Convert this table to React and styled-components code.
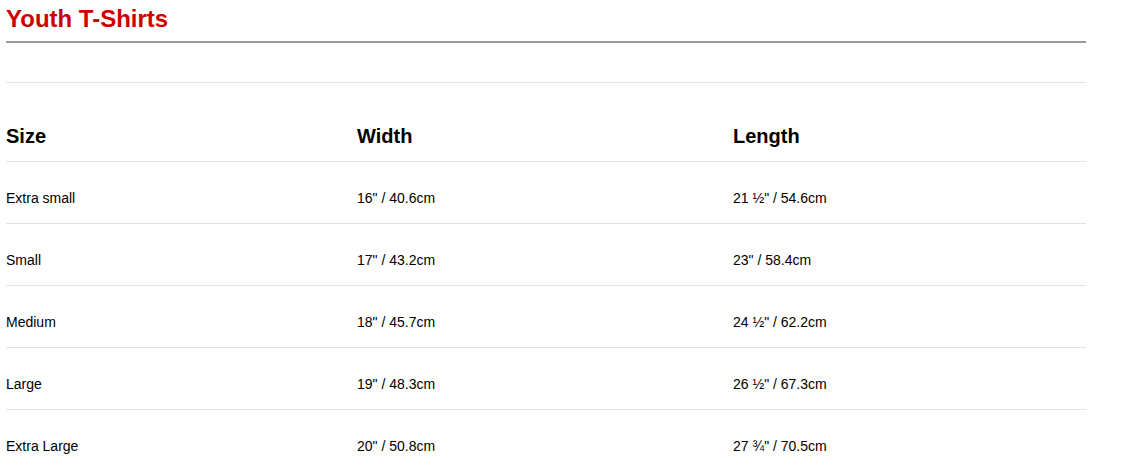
import React from "react";
import styled, { createGlobalStyle } from "styled-components";

const GlobalStyle = createGlobalStyle`
  body {
    margin: 0;
    background: #fff;
    font-family: "Liberation Sans", Arial, sans-serif;
  }
`;

const Page = styled.div`
  width: 1080px;
  padding-left: 6px;
`;

const Title = styled.h2`
  margin: 0;
  padding-top: 5px;
  height: 36px;
  font-size: 24px;
  line-height: 28px;
  font-weight: 700;
  color: #cc0000;
  border-bottom: 2px solid #9a9a9a;
  box-sizing: border-box;
  height: 43px;
`;

const Spacer = styled.div`
  height: 39px;
  border-bottom: 1px solid #e2e2e2;
`;

const Row = styled.div`
  display: grid;
  grid-template-columns: 351px 376px 1fr;
  align-items: end;
  box-sizing: border-box;
  height: ${(p) => (p.$head ? "79px" : "62px")};
  padding-bottom: ${(p) => (p.$head ? "13px" : "16px")};
  border-bottom: 1px solid #e2e2e2;
`;

const Cell = styled.div`
  font-size: ${(p) => (p.$head ? "20px" : "14px")};
  font-weight: ${(p) => (p.$head ? 700 : 400)};
  color: #000;
  line-height: ${(p) => (p.$head ? "24px" : "17px")};
`;

const rows = [
  ["Extra small", "16\" / 40.6cm", "21 ½\" / 54.6cm"],
  ["Small", "17\" / 43.2cm", "23\" / 58.4cm"],
  ["Medium", "18\" / 45.7cm", "24 ½\" / 62.2cm"],
  ["Large", "19\" / 48.3cm", "26 ½\" / 67.3cm"],
  ["Extra Large", "20\" / 50.8cm", "27 ¾\" / 70.5cm"],
];

const App = () => {
  return (
    <Page>
      <GlobalStyle />
      <Title>Youth T-Shirts</Title>
      <Spacer />
      <Row $head>
        <Cell $head>Size</Cell>
        <Cell $head>Width</Cell>
        <Cell $head>Length</Cell>
      </Row>
      {rows.map((r) => (
        <Row key={r[0]}>
          {r.map((c, i) => (
            <Cell key={i}>{c}</Cell>
          ))}
        </Row>
      ))}
    </Page>
  );
};

export default App;
